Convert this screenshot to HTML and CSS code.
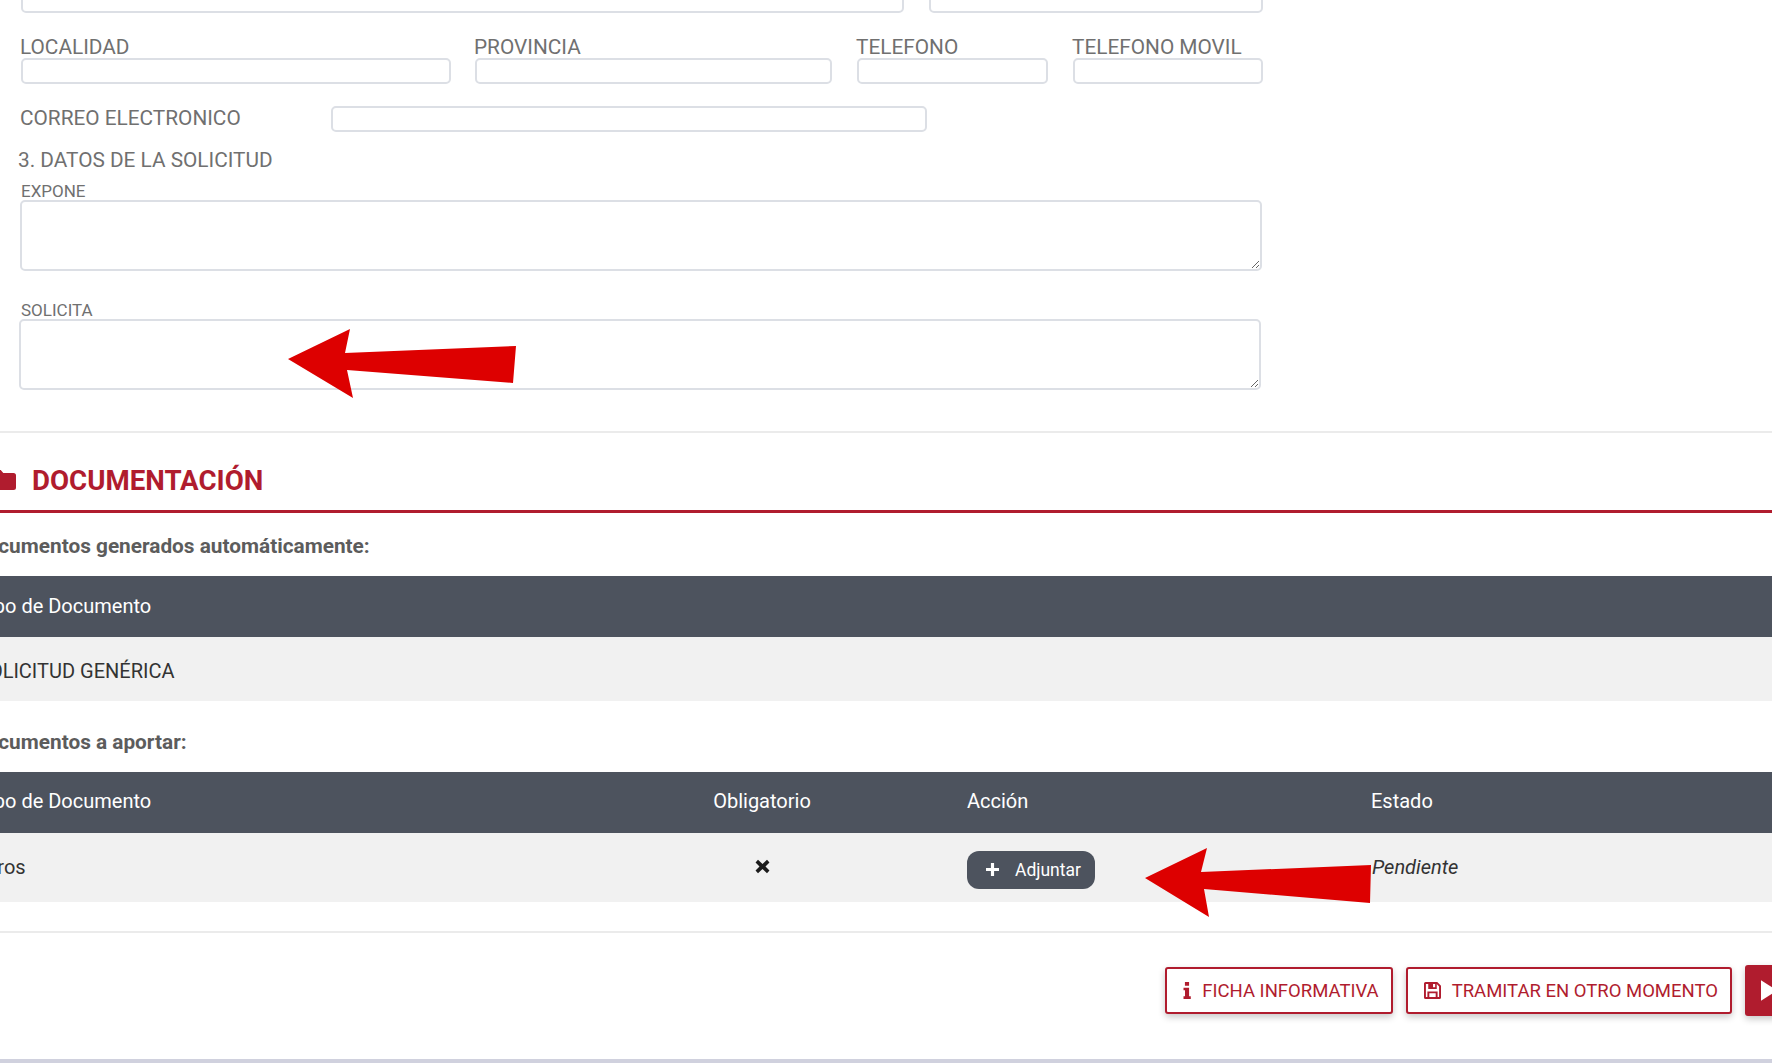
FILE: index.html
```html
<!DOCTYPE html>
<html lang="es">
<head>
<meta charset="utf-8">
<title>Solicitud genérica</title>
<link rel="stylesheet" href="styles.css">
</head>
<body>
<div class="page">
  <form class="form">
    <div class="row row-top">
      <input class="field f-a" type="text">
      <input class="field f-b" type="text">
    </div>
    <div class="row row-labelled">
      <label class="group f-loc"><span class="label">LOCALIDAD</span><input class="field" type="text"></label>
      <label class="group f-pro"><span class="label">PROVINCIA</span><input class="field" type="text"></label>
      <label class="group f-tel"><span class="label">TELEFONO</span><input class="field" type="text"></label>
      <label class="group f-mov"><span class="label">TELEFONO MOVIL</span><input class="field" type="text"></label>
    </div>
    <label class="row row-mail"><span class="label mail-label">CORREO ELECTRONICO</span><input class="field f-mail" type="text"></label>
    <h3 class="subhead">3. DATOS DE LA SOLICITUD</h3>
    <label class="area-group g-expone"><span class="small-label">EXPONE</span><textarea class="area"></textarea></label>
    <label class="area-group g-solicita"><span class="small-label">SOLICITA</span><textarea class="area"></textarea></label>
  </form>

  <hr class="rule rule-docs">

  <section class="docs">
    <h2 class="docs-title">
      <svg class="folder" viewBox="0 0 24 20" aria-hidden="true"><path d="M2.5 0h6.2l2.6 3h10.2A2.5 2.5 0 0 1 24 5.500v12A2.500 2.500 0 0 1 21.500 20h-19A2.500 2.500 0 0 1 0 17.500v-15A2.500 2.500 0 0 1 2.500 0z"/></svg>
      <span>DOCUMENTACIÓN</span>
    </h2>
    <p class="docs-sub sub-auto">Documentos generados automáticamente:</p>
    <div class="table">
      <div class="thead cols"><span>Tipo de Documento</span></div>
      <div class="tbody tbody-auto cols"><span>SOLICITUD GENÉRICA</span></div>
    </div>
    <p class="docs-sub sub-own">Documentos a aportar:</p>
    <div class="table">
      <div class="thead thead-own cols">
        <span>Tipo de Documento</span>
        <span class="center">Obligatorio</span>
        <span>Acción</span>
        <span>Estado</span>
      </div>
      <div class="tbody tbody-own cols">
        <span>Otros</span>
        <span class="center">
          <svg class="cross" viewBox="0 0 14 14" aria-hidden="true"><path d="M2.800 0.800L7 4.600l4.200-3.800 2.300 2.400L9.800 7l3.700 3.800-2.300 2.400L7 9.400l-4.200 3.800-2.300-2.400L4.200 7 0.500 3.200z"/></svg>
        </span>
        <span>
          <button class="attach" type="button">
            <svg class="plus" viewBox="0 0 14 14" aria-hidden="true"><path d="M5.300 0h3.400v5.300H14v3.400H8.700V14H5.300V8.700H0V5.300h5.300z"/></svg>
            Adjuntar
          </button>
        </span>
        <span class="status">Pendiente</span>
      </div>
    </div>
  </section>

  <hr class="rule rule-actions">

  <div class="actions">
    <button class="btn btn-line" type="button">
      <svg class="ico-info" viewBox="0 0 8 18" aria-hidden="true"><path d="M1.800 0h4.400v4H1.800zM0.300 6h5.900v9.200H8V18H0.300v-2.800h1.600V8.800H0.300z"/></svg>
      FICHA INFORMATIVA
    </button>
    <button class="btn btn-line" type="button">
      <svg class="ico-save" viewBox="0 0 16 16" aria-hidden="true"><path fill-rule="evenodd" d="M1.500 0h11L16 3.500v11a1.500 1.500 0 0 1-1.500 1.500h-13A1.500 1.500 0 0 1 0 14.500v-13A1.500 1.500 0 0 1 1.500 0zM1.800 1.800v12.400h1.400V9h9.600v5.200h1.400V4.300L12 1.900v4.600H4V1.800zM5 14.200h6V10.700H5zM8.500 1.800v3.200h2V1.800z"/></svg>
      TRAMITAR EN OTRO MOMENTO
    </button>
    <button class="btn btn-solid" type="button" aria-label="Continuar">
      <svg class="ico-play" viewBox="0 0 14 18" aria-hidden="true"><path d="M0 0l14 9-14 9z"/></svg>
    </button>
  </div>

  <div class="page-end"></div>

  <svg class="arrows" viewBox="0 0 1772 1063" aria-hidden="true">
    <polygon points="288,359 350,329 345,353 516,346 513,383 347,370 353,398"/>
    <polygon points="1145,878 1207,848 1201,872 1371,865 1370,903 1204,889 1209,917"/>
  </svg>
</div>
</body>
</html>
```

FILE: styles.css
```css
* { box-sizing: border-box; }

html, body {
  margin: 0;
  height: 100%;
  overflow: hidden;
  background: #fff;
}

body {
  font-family: Roboto, "Liberation Sans", sans-serif;
  color: #333;
}

.page {
  position: relative;
  width: 1772px;
  height: 1063px;
  overflow: hidden;
}

/* form */
.form {
  margin-top: -13px;
  padding-left: 21px;
  width: 1272px;
}

.row { display: flex; }

.row-top { gap: 25px; }

.field {
  display: block;
  height: 26px;
  width: 100%;
  border: 2px solid #dcdfe5;
  border-radius: 5px;
  background: #fff;
  padding: 0 8px;
}

.f-a { width: 883px; }
.f-b { width: 334px; }

.row-labelled {
  margin-top: 22px;
}

.group { display: block; flex: none; }
.f-loc { width: 430px; margin-right: 24px; }
.f-pro { width: 357px; margin-right: 25px; }
.f-tel { width: 191px; margin-right: 25px; }
.f-mov { width: 190px; }

.label {
  display: block;
  margin-left: -1px;
  font-size: 20.8px;
  line-height: 24px;
  color: #707070;
  white-space: nowrap;
}

.group .label { margin-bottom: -1px; }

.row-mail {
  margin-top: 22px;
  align-items: center;
}

.mail-label { width: 311px; flex: none; padding-bottom: 2px; }
.f-mail { width: 596px; }

.subhead {
  margin: 16px 0 0 -3px;
  font-size: 20.8px;
  line-height: 24px;
  font-weight: 400;
  color: #707070;
}

.area-group { display: block; }
.g-expone { margin-top: 9px; margin-left: -1px; width: 1242px; }
.g-solicita { margin-top: 29px; margin-left: -2px; width: 1242px; }

.small-label {
  display: block;
  font-size: 17px;
  line-height: 20px;
  color: #707070;
  padding-left: 1px;
}

.g-solicita .small-label { padding-left: 2px; }

.area {
  display: block;
  width: 100%;
  height: 71px;
  border: 2px solid #dcdfe5;
  border-radius: 5px;
  background: #fff;
  margin-top: -1px;
  padding: 6px 8px;
}

/* rules */
.rule {
  margin: 0;
  border: 0;
  height: 2px;
  background: #ebebeb;
}

.rule-docs { margin-top: 41px; }
.rule-actions { margin-top: 29px; }

.docs { width: 1772px; }

.docs-title {
  margin: 0;
  height: 80px;
  padding-top: 17px;
  display: flex;
  align-items: center;
  gap: 16px;
  font-size: 27.7px;
  font-weight: 700;
  color: #b01c2e;
  border-bottom: 3px solid #b01c2e;
}

.folder {
  width: 24px;
  height: 20px;
  margin-left: -8px;
  fill: #b01c2e;
  flex: none;
}

.docs-sub {
  margin: 0 0 0 -27px;
  font-size: 20.8px;
  line-height: 24px;
  font-weight: 700;
  color: #5c5c5c;
}

.sub-auto { padding-top: 21px; padding-bottom: 18px; }
.sub-own { padding-top: 29px; padding-bottom: 18px; }

.cols {
  display: grid;
  width: 1795px;
  margin-left: -23px;
  grid-template-columns: 580px 378px 388px 1fr;
  column-gap: 16px;
  align-items: center;
}

.thead {
  height: 61px;
  padding-bottom: 2px;
  background: #4d535e;
  color: #fff;
  font-size: 20px;
}

.thead-own { padding-bottom: 3px; }

.tbody {
  background: #f1f1f1;
  color: #333;
  font-size: 20px;
}

.tbody-auto { height: 64px; padding-top: 3px; }
.tbody-own { height: 69px; padding-bottom: 2px; }

.center { text-align: center; }

.cross {
  display: block;
  width: 15px;
  height: 15px;
  margin: 0 auto;
  fill: #1c1c1c;
}

.attach {
  display: flex;
  align-items: center;
  gap: 16px;
  width: 128px;
  height: 38px;
  margin-top: 6px;
  padding: 0 0 0 19px;
  border: 0;
  border-radius: 12px;
  background: #4d535e;
  color: #fff;
  font-family: inherit;
  font-size: 17.5px;
}

.plus {
  width: 13px;
  height: 13px;
  fill: #fff;
  flex: none;
}

.status { font-style: italic; color: #333; margin-left: 1px; }

/* actions */
.actions {
  display: flex;
  justify-content: flex-end;
  align-items: center;
  gap: 13px;
  height: 126px;
  padding-bottom: 12px;
  margin-right: -73px;
}

.btn {
  display: flex;
  align-items: center;
  height: 47px;
  border-radius: 3px;
  font-family: inherit;
  font-size: 18.5px;
  box-shadow: 0 3px 7px rgba(0, 0, 0, .22);
}

.btn-line {
  background: #fff;
  color: #b01c2e;
  border: 2px solid #b01c2e;
  padding: 1px 12px 0 16px;
  gap: 11px;
}

.btn-solid {
  height: 51px;
  width: 100px;
  background: #b01c2e;
  border: 0;
  padding: 0 0 0 16px;
}

.ico-info { width: 8px; height: 17px; fill: #b01c2e; flex: none; }
.ico-save { width: 17px; height: 17px; fill: #b01c2e; flex: none; }
.ico-play { width: 16px; height: 21px; fill: #fff; flex: none; }

.page-end {
  height: 4px;
  background: #d0d1de;
}

/* annotation arrows drawn over the screenshot */
.arrows {
  position: absolute;
  inset: 0;
  width: 1772px;
  height: 1063px;
  fill: #dd0000;
  pointer-events: none;
}
```
